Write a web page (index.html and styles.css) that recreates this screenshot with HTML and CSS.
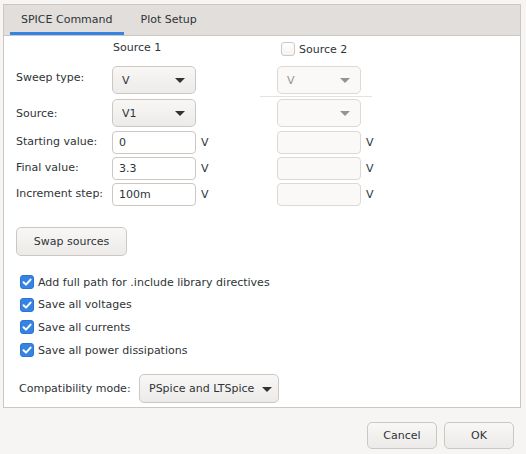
FILE: index.html
```html
<!DOCTYPE html>
<html>
<head>
<meta charset="utf-8">
<link rel="stylesheet" href="styles.css">
</head>
<body>
<div class="dialog">
  <div class="notebook">
    <div class="tabs">
      <div class="tab active">SPICE Command</div>
      <div class="tab">Plot Setup</div>
    </div>
    <div class="page">
      <div class="grid">
        <div class="colhead c2">Source 1</div>
        <div class="colhead c4 chk-head"><span class="cb"></span>Source 2</div>

        <div class="lbl lbl-top r2">Sweep type:</div>
        <div class="combo c2 r2"><span>V</span><i class="arrow"></i></div>
        <div class="combo disabled c4 r2"><span>V</span><i class="arrow"></i></div>
        <div class="sep r2"></div>

        <div class="lbl r3">Source:</div>
        <div class="combo c2 r3"><span>V1</span><i class="arrow"></i></div>
        <div class="combo disabled c4 r3"><span></span><i class="arrow"></i></div>

        <div class="lbl r4">Starting value:</div>
        <div class="entry c2 r4">0</div>
        <div class="unit c3 r4">V</div>
        <div class="entry disabled c4 r4"></div>
        <div class="unit c5 r4">V</div>

        <div class="lbl r5">Final value:</div>
        <div class="entry c2 r5">3.3</div>
        <div class="unit c3 r5">V</div>
        <div class="entry disabled c4 r5"></div>
        <div class="unit c5 r5">V</div>

        <div class="lbl r6">Increment step:</div>
        <div class="entry c2 r6">100m</div>
        <div class="unit c3 r6">V</div>
        <div class="entry disabled c4 r6"></div>
        <div class="unit c5 r6">V</div>
      </div>

      <button class="btn swap">Swap sources</button>

      <div class="checks">
        <label class="check"><span class="cb on"><svg viewBox="0 0 14 14" width="14" height="14"><path d="M3.5 7.2 L6 9.6 L10.6 4.6" fill="none" stroke="#fff" stroke-width="2" stroke-linecap="round" stroke-linejoin="round"/></svg></span>Add full path for .include library directives</label>
        <label class="check"><span class="cb on"><svg viewBox="0 0 14 14" width="14" height="14"><path d="M3.5 7.2 L6 9.6 L10.6 4.6" fill="none" stroke="#fff" stroke-width="2" stroke-linecap="round" stroke-linejoin="round"/></svg></span>Save all voltages</label>
        <label class="check"><span class="cb on"><svg viewBox="0 0 14 14" width="14" height="14"><path d="M3.5 7.2 L6 9.6 L10.6 4.6" fill="none" stroke="#fff" stroke-width="2" stroke-linecap="round" stroke-linejoin="round"/></svg></span>Save all currents</label>
        <label class="check"><span class="cb on"><svg viewBox="0 0 14 14" width="14" height="14"><path d="M3.5 7.2 L6 9.6 L10.6 4.6" fill="none" stroke="#fff" stroke-width="2" stroke-linecap="round" stroke-linejoin="round"/></svg></span>Save all power dissipations</label>
      </div>

      <div class="compat">
        <span class="compat-lbl">Compatibility mode:</span>
        <div class="combo wide"><span>PSpice and LTSpice</span><i class="arrow"></i></div>
      </div>
    </div>
  </div>
  <div class="actions">
    <button class="btn act">Cancel</button>
    <button class="btn act">OK</button>
  </div>
</div>
</body>
</html>
```
FILE: styles.css
```css
* { box-sizing: border-box; }
html, body { margin: 0; padding: 0; }
body {
  background: #f6f5f4;
  font-family: "DejaVu Sans", sans-serif;
  font-size: 11px;
  color: #2e3436;
  width: 526px;
  height: 454px;
  overflow: hidden;
}
.dialog { padding-top: 4px; }
.notebook {
  margin-left: 3px;
  width: 518px;
  border: 1px solid #cdc7c2;
  background: #fff;
}
.tabs {
  display: flex;
  height: 31px;
  background: #e1dedb;
  border-bottom: 1px solid #cdc7c2;
  padding-left: 6px;
}
.tab {
  padding: 0 11px;
  line-height: 30px;
  height: 30px;
  margin-right: 6px;
}
.tab.active {
  box-shadow: inset 0 -3px 0 #3584e4;
}
.page {
  padding: 4px 12px 4px 12px;
}
.grid {
  display: grid;
  grid-template-columns: 96px 84px 81px 84px auto;
  grid-template-rows: 22px 32px 33px 27px 26px 26px;
}
.c2 { grid-column: 2; }
.c3 { grid-column: 3; }
.c4 { grid-column: 4; }
.c5 { grid-column: 5; }
.r2 { grid-row: 2; }
.r3 { grid-row: 3; }
.r4 { grid-row: 4; }
.r5 { grid-row: 5; }
.r6 { grid-row: 6; }
.colhead { grid-row: 1; align-self: start; padding-left: 1px; padding-top: 1px; }
.chk-head { display: flex; align-items: center; margin-left: 3px; padding-top: 2px; }
.lbl { grid-column: 1; align-self: end; padding-bottom: 6px; }
.lbl.r2 { padding-bottom: 0; align-self: center; padding-top: 0; margin-top: -2px; }
.lbl.r3 { padding-bottom: 7px; }
.combo {
  align-self: end;
  height: 28px;
  border: 1px solid #cdc7c2;
  border-radius: 5px;
  background: linear-gradient(#f8f7f6, #edebe9);
  display: flex;
  align-items: center;
  justify-content: space-between;
  padding: 0 10px 0 9px;
}
.combo.disabled {
  background: #faf9f8;
  border-color: #dcd8d5;
  color: #929595;
}
.arrow {
  width: 0; height: 0;
  border-left: 5px solid transparent;
  border-right: 5px solid transparent;
  border-top: 5px solid #2e3436;
  margin-top: 1px;
}
.combo.disabled .arrow { border-top-color: #929595; }
.sep {
  grid-column: 3 / 6;
  grid-row: 2;
  align-self: end;
  margin-left: 64px;
  width: 112px;
  height: 1px;
  background: #e4e2df;
  margin-bottom: -3px;
}
.entry {
  align-self: end;
  height: 23px;
  border: 1px solid #cdc7c2;
  border-radius: 4px;
  background: #fff;
  padding: 0 6px;
  line-height: 21px;
}
.entry.disabled { background: #faf9f8; border-color: #dcd8d5; }
.unit { align-self: end; padding-left: 5px; padding-bottom: 5px; }
.cb {
  display: inline-block;
  width: 14px; height: 14px;
  border: 1px solid #cdc7c2;
  border-radius: 3px;
  background: linear-gradient(#fff, #f4f3f2);
  margin-right: 4px;
}
.cb.on {
  background: #3584e4;
  border-color: #2a76d1;
}
.cb svg { display: block; margin: -1px; }
.btn {
  font-family: "DejaVu Sans", sans-serif;
  font-size: 11px;
  color: #2e3436;
  border: 1px solid #cdc7c2;
  border-radius: 5px;
  background: linear-gradient(#f8f7f6, #edebe9);
  padding: 0;
  display: block;
}
.swap {
  margin-top: 21px;
  width: 111px;
  height: 29px;
  margin-left: 0;
}
.checks {
  margin-top: 19px;
  display: flex;
  flex-direction: column;
  gap: 8.7px;
  padding-left: 4px;
}
.check {
  display: flex;
  align-items: center;
  height: 14px;
}
.compat {
  margin-top: 17px;
  display: flex;
  align-items: center;
  padding-left: 3px;
}
.compat-lbl { width: 120px; }
.combo.wide {
  width: 140px;
  height: 29px;
  padding: 0 6px 0 9px;
}
.actions {
  display: flex;
  justify-content: flex-end;
  gap: 7px;
  padding: 14px 12px 0 0;
}
.act { width: 70px; height: 27px; }
```
